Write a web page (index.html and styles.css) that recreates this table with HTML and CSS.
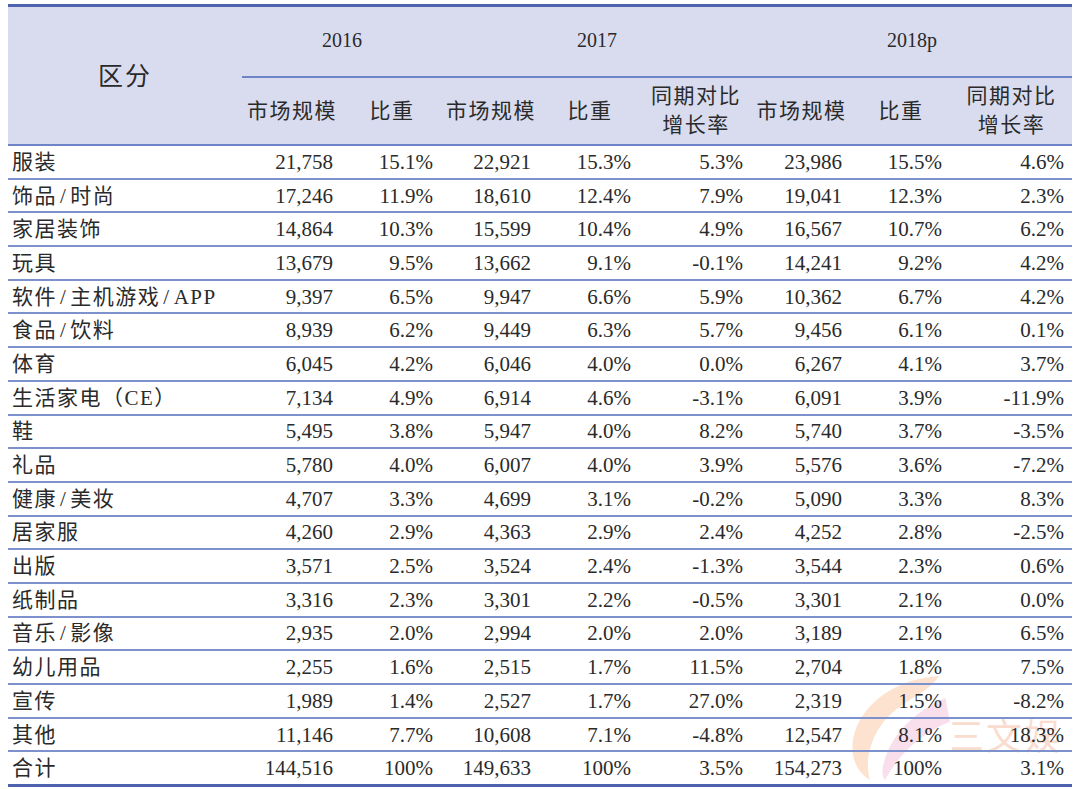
FILE: index.html
```html
<!DOCTYPE html>
<html lang="zh">
<head>
<meta charset="utf-8">
<link rel="stylesheet" href="styles.css">
</head>
<body>
<div class="wrap">
<table class="tbl">
  <colgroup>
    <col class="c0"><col class="c1"><col class="c2"><col class="c3"><col class="c4"><col class="c5"><col class="c6"><col class="c7"><col class="c8">
  </colgroup>
  <thead>
    <tr class="h1">
      <th rowspan="2" class="cat">区分</th>
      <th colspan="2" class="yr">2016</th>
      <th colspan="3" class="yr">2017</th>
      <th colspan="3" class="yr">2018p</th>
    </tr>
    <tr class="h2">
      <th>市场规模</th><th>比重</th>
      <th>市场规模</th><th>比重</th><th class="two">同期对比<br>增长率</th>
      <th>市场规模</th><th>比重</th><th class="two">同期对比<br>增长率</th>
    </tr>
  </thead>
  <tbody>
    <tr><td>服装</td><td>21,758</td><td>15.1%</td><td>22,921</td><td>15.3%</td><td>5.3%</td><td>23,986</td><td>15.5%</td><td>4.6%</td></tr>
    <tr><td>饰品<span class="sl">/</span>时尚</td><td>17,246</td><td>11.9%</td><td>18,610</td><td>12.4%</td><td>7.9%</td><td>19,041</td><td>12.3%</td><td>2.3%</td></tr>
    <tr><td>家居装饰</td><td>14,864</td><td>10.3%</td><td>15,599</td><td>10.4%</td><td>4.9%</td><td>16,567</td><td>10.7%</td><td>6.2%</td></tr>
    <tr><td>玩具</td><td>13,679</td><td>9.5%</td><td>13,662</td><td>9.1%</td><td>-0.1%</td><td>14,241</td><td>9.2%</td><td>4.2%</td></tr>
    <tr><td>软件<span class="sl">/</span>主机游戏<span class="sl">/</span>APP</td><td>9,397</td><td>6.5%</td><td>9,947</td><td>6.6%</td><td>5.9%</td><td>10,362</td><td>6.7%</td><td>4.2%</td></tr>
    <tr><td>食品<span class="sl">/</span>饮料</td><td>8,939</td><td>6.2%</td><td>9,449</td><td>6.3%</td><td>5.7%</td><td>9,456</td><td>6.1%</td><td>0.1%</td></tr>
    <tr><td>体育</td><td>6,045</td><td>4.2%</td><td>6,046</td><td>4.0%</td><td>0.0%</td><td>6,267</td><td>4.1%</td><td>3.7%</td></tr>
    <tr><td>生活家电（CE）</td><td>7,134</td><td>4.9%</td><td>6,914</td><td>4.6%</td><td>-3.1%</td><td>6,091</td><td>3.9%</td><td>-11.9%</td></tr>
    <tr><td>鞋</td><td>5,495</td><td>3.8%</td><td>5,947</td><td>4.0%</td><td>8.2%</td><td>5,740</td><td>3.7%</td><td>-3.5%</td></tr>
    <tr><td>礼品</td><td>5,780</td><td>4.0%</td><td>6,007</td><td>4.0%</td><td>3.9%</td><td>5,576</td><td>3.6%</td><td>-7.2%</td></tr>
    <tr><td>健康<span class="sl">/</span>美妆</td><td>4,707</td><td>3.3%</td><td>4,699</td><td>3.1%</td><td>-0.2%</td><td>5,090</td><td>3.3%</td><td>8.3%</td></tr>
    <tr><td>居家服</td><td>4,260</td><td>2.9%</td><td>4,363</td><td>2.9%</td><td>2.4%</td><td>4,252</td><td>2.8%</td><td>-2.5%</td></tr>
    <tr><td>出版</td><td>3,571</td><td>2.5%</td><td>3,524</td><td>2.4%</td><td>-1.3%</td><td>3,544</td><td>2.3%</td><td>0.6%</td></tr>
    <tr><td>纸制品</td><td>3,316</td><td>2.3%</td><td>3,301</td><td>2.2%</td><td>-0.5%</td><td>3,301</td><td>2.1%</td><td>0.0%</td></tr>
    <tr><td>音乐<span class="sl">/</span>影像</td><td>2,935</td><td>2.0%</td><td>2,994</td><td>2.0%</td><td>2.0%</td><td>3,189</td><td>2.1%</td><td>6.5%</td></tr>
    <tr><td>幼儿用品</td><td>2,255</td><td>1.6%</td><td>2,515</td><td>1.7%</td><td>11.5%</td><td>2,704</td><td>1.8%</td><td>7.5%</td></tr>
    <tr><td>宣传</td><td>1,989</td><td>1.4%</td><td>2,527</td><td>1.7%</td><td>27.0%</td><td>2,319</td><td>1.5%</td><td>-8.2%</td></tr>
    <tr><td>其他</td><td>11,146</td><td>7.7%</td><td>10,608</td><td>7.1%</td><td>-4.8%</td><td>12,547</td><td>8.1%</td><td>18.3%</td></tr>
    <tr class="total"><td>合计</td><td>144,516</td><td>100%</td><td>149,633</td><td>100%</td><td>3.5%</td><td>154,273</td><td>100%</td><td>3.1%</td></tr>
  </tbody>
</table>
<div class="wm" aria-hidden="true">
  <svg class="wm-logo" width="108" height="112" viewBox="0 0 100 100">
    <path d="M88 4 C42 6 6 38 8 74 C9 86 16 95 24 100 C18 80 26 50 52 32 C66 22 80 16 88 4 Z" fill="#f8b989"/>
    <path d="M94 24 C66 36 42 58 36 88 C35 94 36 98 38 100 C50 78 68 58 98 46 Z" fill="#eeb0cf"/>
  </svg>
  <span class="wm-text">三文娱</span>
</div>
</div>
</body>
</html>
```

FILE: styles.css
```css
html {
  margin: 0;
  padding: 0;
  background: #ffffff;
}
body {
  margin: 0;
  padding: 4px 8px 0 8px;
}
.wrap {
  position: relative;
  width: 1064px;
}
.tbl {
  width: 1064px;
  border-collapse: collapse;
  table-layout: fixed;
  font-family: "Liberation Serif", "Noto Sans CJK SC", serif;
  color: #2a2a2a;
  border-top: 3px solid #4e63ad;
  border-bottom: 3px solid #4e63ad;
}
.c0 { width: 234px; }
.c1 { width: 100px; }
.c2 { width: 100px; }
.c3 { width: 98px; }
.c4 { width: 100px; }
.c5 { width: 112px; }
.c6 { width: 99px; }
.c7 { width: 100px; }
.c8 { width: 121px; }

thead th {
  background: #d9dcef;
  font-weight: normal;
  padding: 0;
  text-align: center;
}
.h1 th {
  height: 67px;
}
.h1 .cat {
  font-size: 25px;
  letter-spacing: 2px;
  vertical-align: middle;
  padding-bottom: 4px;
  border-bottom: 2px solid #6d84c6;
}
.h1 .yr {
  font-size: 20px;
  vertical-align: middle;
  padding-bottom: 2px;
  border-bottom: 2px solid #6d84c6;
}
.h2 th {
  height: 66px;
  font-size: 21px;
  letter-spacing: 1.5px;
  line-height: 30px;
  border-bottom: 2px solid #6d84c6;
}
.h2 .two {
  line-height: 29px;
}

tbody td {
  height: 31.7px;
  padding: 0 8px 0 0;
  font-size: 21px;
  line-height: 24px;
  text-align: right;
  white-space: nowrap;
  border-bottom: 2px solid #7d92cc;
  border-left: 2px solid #ffffff;
}
tbody td:first-child {
  text-align: left;
  padding-left: 4px;
  font-size: 21px;
  letter-spacing: 1.5px;
  border-left: none;
}
.sl {
  margin: 0 3px;
}
tbody tr.total td {
  border-bottom: none;
}

.wm {
  position: absolute;
  left: 830px;
  top: 660px;
  width: 234px;
  height: 122px;
  opacity: 0.4;
  pointer-events: none;
  z-index: -1;
}
.wm-logo {
  position: absolute;
  left: 6px;
  top: 6px;
}
.wm-text {
  position: absolute;
  left: 110px;
  top: 50px;
  font-family: "Noto Sans CJK SC", sans-serif;
  font-size: 36px;
  line-height: 40px;
  letter-spacing: 2px;
  color: #f4a98a;
}
```
